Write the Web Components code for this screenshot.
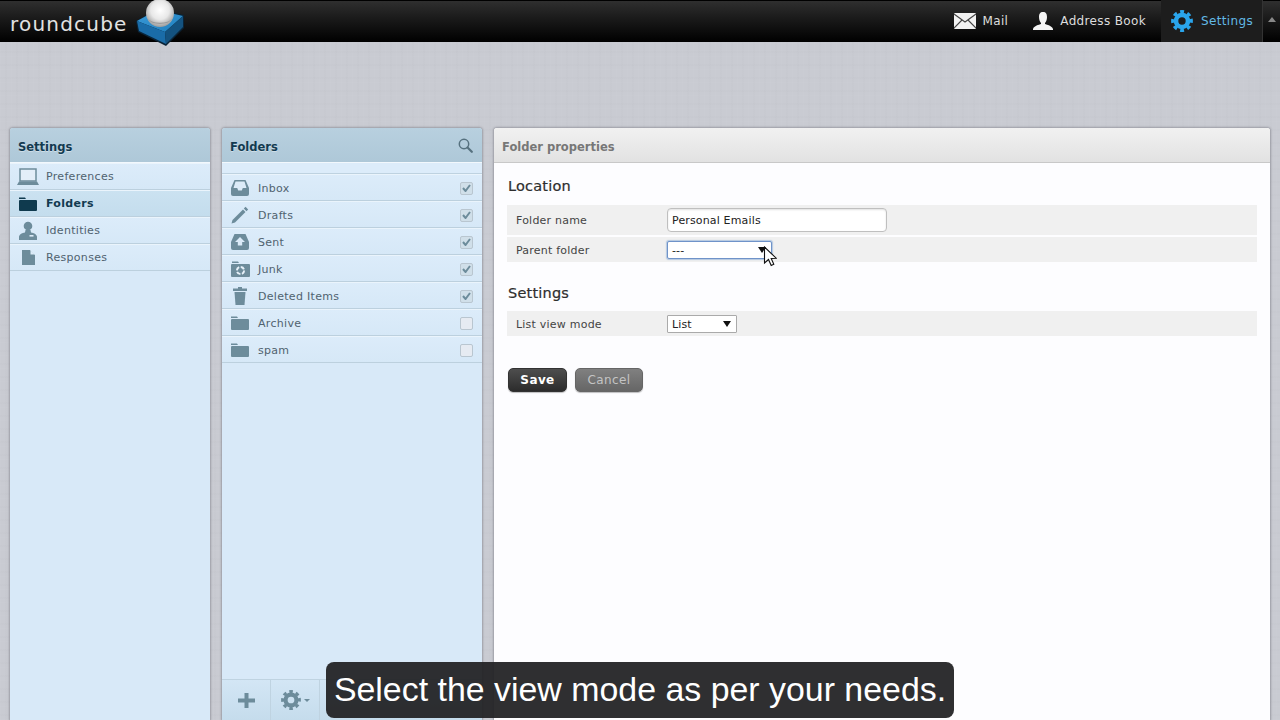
<!DOCTYPE html>
<html lang="en"><head><meta charset="utf-8"><title>Roundcube</title>
<style>
html,body{margin:0;height:720px;overflow:hidden}
body{font-family:"DejaVu Sans",sans-serif;font-size:11px;background:#c9cbd2;position:relative;display:flex;flex-direction:column}
#main{flex:1;min-height:0;display:flex;gap:12px;padding:86px 10px 0;
background-color:#c9cbd2;
background-image:repeating-linear-gradient(90deg,rgba(255,255,255,.025) 0 1px,transparent 1px 5px,rgba(0,0,0,.008) 5px 7px,transparent 7px 11px),repeating-linear-gradient(0deg,rgba(255,255,255,.025) 0 1px,transparent 1px 4px,rgba(0,0,0,.008) 4px 6px,transparent 6px 13px)}
</style></head><body>
<rc-header></rc-header>
<div id="main">
  <rc-panel style="width:200px" title-text="Settings">
    <rc-row icon="laptop">Preferences</rc-row>
    <rc-row icon="folder" selected>Folders</rc-row>
    <rc-row icon="identity">Identities</rc-row>
    <rc-row icon="doc">Responses</rc-row>
  </rc-panel>
  <rc-panel style="width:260px" title-text="Folders" search gap footer>
    <rc-row icon="inbox" check="on">Inbox</rc-row>
    <rc-row icon="pencil" check="on">Drafts</rc-row>
    <rc-row icon="sent" check="on">Sent</rc-row>
    <rc-row icon="junk" check="on">Junk</rc-row>
    <rc-row icon="trash" check="on">Deleted Items</rc-row>
    <rc-row icon="folder2" check="off">Archive</rc-row>
    <rc-row icon="folder2" check="off">spam</rc-row>
  </rc-panel>
  <rc-content style="flex:1"></rc-content>
</div>
<rc-cursor></rc-cursor>
<rc-caption>Select the view mode as per your needs.</rc-caption>
<script>
const G='#6d8c9b';
const ICONS={
mail:'<svg width="22" height="16" viewBox="0 0 22 16"><rect width="22" height="16" rx="1" fill="#f2f2f2"/><path d="M0 1l11 8 11-8M0 15l8-8M22 15l-8-8" fill="none" stroke="#444" stroke-width="1.1"/></svg>',
person:'<svg width="20" height="20" viewBox="0 0 20 20"><path d="M10 1c3 0 4 2 4 5s-1 5-2 6v1c2 1 7 1.500 8 5v1H0v-1c1-3.500 6-4 8-5v-1C7 11 6 9 6 6s1-5 4-5z" fill="#f4f4f4"/></svg>',
gear:'<svg width="22" height="22" viewBox="0 0 22 22"><circle cx="11" cy="11" r="6" fill="none" stroke="COL" stroke-width="4.600"/><circle cx="11" cy="11" r="9.200" fill="none" stroke="COL" stroke-width="3.400" stroke-dasharray="3.800 3.425" transform="rotate(-13 11 11)"/></svg>',
laptop:`<svg width="22" height="18" viewBox="0 0 22 18"><path d="M3 1h16v12H3z" fill="#e3eef8" stroke="${G}" stroke-width="1.500"/><path d="M2 13.500h18l2 3.500H0z" fill="${G}"/></svg>`,
folder:'<svg width="18" height="14" viewBox="0 0 18 14"><path d="M0 2V.5h6L7 2z" fill="#0f3a4e"/><rect y="3" width="18" height="11" rx="1" fill="#0f3a4e"/></svg>',
folder2:`<svg width="18" height="14" viewBox="0 0 18 14"><path d="M0 2V.5h6L7 2z" fill="${G}"/><rect y="3" width="18" height="11" rx="1" fill="${G}"/></svg>`,
identity:`<svg width="18" height="19" viewBox="0 0 18 19"><circle cx="9" cy="5" r="4.300" fill="${G}"/><path d="M6.500 9h5l.5 2.500c3 .5 5.500 1.500 6 4V19H0v-3.500c.5-2.500 3-3.500 6-4z" fill="${G}"/><rect x="10.500" y="14" width="4" height="1.600" fill="#dcebf8"/></svg>`,
doc:`<svg width="13" height="15" viewBox="0 0 13 15"><path d="M0 0h8l5 5v10H0z" fill="${G}"/><path d="M8.500 0L13 4.500H8.500z" fill="#dcebf8"/></svg>`,
inbox:`<svg width="18" height="16" viewBox="0 0 18 16"><path d="M3.500 0h11L18 8v6a2 2 0 0 1-2 2H2a2 2 0 0 1-2-2V8z" fill="${G}"/><path d="M4.500 1.500h9L15.500 8h-3.700L10.800 10.500H7.200L6.200 8H2.500z" fill="#dcebf8"/></svg>`,
sent:`<svg width="18" height="16" viewBox="0 0 18 16"><path d="M3.500 0h11L18 8v6a2 2 0 0 1-2 2H2a2 2 0 0 1-2-2V8z" fill="${G}"/><path d="M9 3l5 5h-2.800V11.500H6.800V8H4z" fill="#dcebf8"/></svg>`,
pencil:`<svg width="18" height="18" viewBox="0 0 18 18"><path d="M12 3.500l2.500 2.500L4 16.500 .5 17.500 1.500 14z" fill="${G}"/><path d="M14.500 .8l2.700 2.700-1.700 1.700-2.700-2.700z" fill="${G}"/></svg>`,
junk:`<svg width="19" height="16" viewBox="0 0 19 16"><path d="M1 2V.5h6L8 2z" fill="${G}"/><rect y="3" width="19" height="13" rx="1" fill="${G}"/><circle cx="9.500" cy="9.500" r="3.600" fill="none" stroke="#e8f2fa" stroke-width="2" stroke-dasharray="4 1.600"/></svg>`,
trash:`<svg width="14" height="18" viewBox="0 0 14 18"><path d="M5 0h4v1.500h5V4H0V1.500h5z" fill="${G}"/><path d="M1.500 5h11l-1 13h-9z" fill="${G}"/></svg>`,
search:'<svg width="15" height="15" viewBox="0 0 15 15"><circle cx="6" cy="6" r="4.700" fill="none" stroke="#56717f" stroke-width="1.500"/><path d="M9.500 9.500l4.300 4.300" stroke="#56717f" stroke-width="2.200" stroke-linecap="round"/></svg>',
plus:`<svg width="17" height="15" viewBox="0 0 17 15"><path d="M6.500 0h4v5.500H17v4h-6.500V15h-4V9.500H0v-4h6.500z" fill="${G}"/></svg>`
};
function icon(n,col){return (ICONS[n]||'').replace(/COL/g,col||'#2aa5ec')}
function def(name,render){customElements.define(name,class extends HTMLElement{constructor(){super();this.attachShadow({mode:'open'})}connectedCallback(){this.shadowRoot.innerHTML=render(this)}})}

def('rc-header',()=>`<style>
:host{display:flex;flex:none;height:42px;align-items:stretch;background:linear-gradient(#000 0 1px,#2f2f2f 1px,#1c1c1c 40%,#000 100%);color:#ddd;font-size:12px;position:relative;z-index:2}
.logo{display:flex;align-items:center;padding-left:10px;position:relative}
.word{font:400 20px/1 "DejaVu Sans",sans-serif;color:#e2e2e2;letter-spacing:1.2px;padding-top:5px}
.cube{position:absolute;left:135px;top:0}
nav{margin-left:auto;display:flex;align-items:stretch}
.it{display:flex;align-items:center;gap:7px;padding-right:25px;letter-spacing:.35px}
.on{background:#1d1d1d;color:#62b9e6;padding:0 9px 0 10px;gap:8px;border-right:1px solid #333;margin-left:-10px}
.tg{width:17px;display:flex;justify-content:center;padding-top:17px;box-sizing:border-box}
.tg i{width:0;height:0;border:4px solid transparent;border-top:0;border-bottom:5px solid #888}
</style>
<div class="logo"><span class="word">roundcube</span>
<svg class="cube" width="52" height="46" viewBox="0 0 52 46"><defs><radialGradient id="ba" cx=".5" cy=".4" r=".6"><stop offset="0" stop-color="#fff"/><stop offset=".55" stop-color="#e8e8e8"/><stop offset="1" stop-color="#9c9c9c"/></radialGradient><linearGradient id="tp" x1="0" y1="0" x2="1" y2="1"><stop offset="0" stop-color="#3b9bd8"/><stop offset="1" stop-color="#1f7fbe"/></linearGradient></defs>
<path d="M1 21L22 9 49 15 49 28 31 46 3 32z" fill="#0a2438"/><path d="M2 21L22 10 48 16 30 32z" fill="url(#tp)"/><path d="M2 21L30 32 31 44 4 31z" fill="#1a6ca8"/><path d="M30 32L48 16 48 27 31 44z" fill="#14527f"/>
<circle cx="25" cy="13" r="14" fill="url(#ba)"/><path d="M13 19a13 8 0 0 0 24 0 13 6 0 0 1-24 0z" fill="#8d8d8d" opacity=".7"/></svg></div>
<nav><div class="it">${icon('mail')}<span>Mail</span></div><div class="it">${icon('person')}<span>Address Book</span></div>
<div class="it on">${icon('gear')}<span>Settings</span></div><div class="tg"><i></i></div></nav>`);

def('rc-panel',h=>`<style>
:host{display:flex;flex-direction:column;min-height:0;background:#d8e9f8;border-radius:3px 3px 0 0;box-shadow:0 0 2px 1px rgba(90,90,100,.4);overflow:hidden}
header{flex:none;height:34px;box-sizing:border-box;display:flex;align-items:center;justify-content:space-between;padding:3px 9px 0 8px;background:linear-gradient(#b8d0df,#aec8d8);font-weight:bold;font-size:11.500px;letter-spacing:0;color:#123a50;text-shadow:0 1px 0 rgba(255,255,255,.4)}
header svg{margin-top:-3px}
.sep{height:1px;background:#f2f8fd;flex:none}
.gap{height:11px;flex:none;background:#dcecfa;border-bottom:1px solid #bed2e0;box-sizing:border-box}
.list{flex:1;min-height:0}
footer{flex:none;height:41px;box-sizing:border-box;border-top:1px solid #bfd3e1;background:linear-gradient(#d3e6f5,#c5dcec);display:flex}
footer div{display:flex;align-items:center;justify-content:center;border-right:1px solid #bfd3e1;box-sizing:border-box}
.p{width:49px}.g{width:49px;gap:3px}
.g svg{width:20px;height:20px}
.g i{width:0;height:0;border:3px solid transparent;border-top:3px solid ${G};border-bottom:0}
</style><header><span>${h.getAttribute('title-text')}</span>${h.hasAttribute('search')?icon('search'):''}</header><div class="sep"></div>
${h.hasAttribute('gap')?'<div class="gap"></div>':''}<div class="list"><slot></slot></div>
${h.hasAttribute('footer')?`<footer><div class="p">${icon('plus')}</div><div class="g">${icon('gear',G)}<i></i></div></footer>`:''}`);

def('rc-row',h=>{const sel=h.hasAttribute('selected'),c=h.getAttribute('check');return `<style>
:host{display:flex;align-items:center;height:27px;box-sizing:border-box;border-bottom:1px solid #bcd0de;box-shadow:inset 0 1px 0 #eaf4fc;padding-right:9px;${c?'padding-top:2px;':'padding-top:1px;'}color:#50626f;letter-spacing:.3px;background:${sel?'linear-gradient(#cbe2f1,#c4dded)':'linear-gradient(#dcecfa,#d6e8f7)'};${sel?'color:#123a50;font-weight:bold;':''}}
.ic{width:36px;flex:none;display:flex;justify-content:center}
.t{flex:1}
.c{width:11px;height:11px;border:1px solid #b9c6d0;border-radius:2px;background:${c==='on'?'#d0dfe9':'#e6ebf2'};display:flex;align-items:center;justify-content:center}
</style><span class="ic">${icon(h.getAttribute('icon'))}</span><span class="t"><slot></slot></span>${c?`<span class="c">${c==='on'?`<svg width="9" height="8" viewBox="0 0 9 8"><path d="M1 4l2.500 3L8 1" fill="none" stroke="${G}" stroke-width="2"/></svg>`:''}</span>`:''}`});

def('rc-content',()=>`<style>
:host{display:flex;flex-direction:column;background:#fdfdff;border-radius:3px 3px 0 0;box-shadow:0 0 2px 1px rgba(90,90,100,.4);overflow:hidden;min-height:0}
header{height:35px;flex:none;box-sizing:border-box;border-bottom:1px solid #c8c8c8;padding:3px 8px 0;display:flex;align-items:center;background:linear-gradient(#f1f1f1,#e2e2e2);font-size:11.500px;font-weight:bold;color:#777}
.body{padding:14px 13px 0 13px;color:#333;display:flex;flex-direction:column;align-items:stretch}
h3{margin:0;font-size:14.500px;font-weight:normal;color:#2e2e2e;line-height:18px;padding-left:1px;letter-spacing:.2px;-webkit-text-stroke:.2px #2e2e2e}
.r{display:flex;align-items:center;background:#f0f0f0;padding-left:9px;color:#444;letter-spacing:.22px}
.l{width:151px;flex:none}
.adj{padding-top:1px}
.f{background:#fff;box-sizing:border-box;color:#222;display:flex;align-items:center;padding-left:4px;letter-spacing:.15px}
.in{width:220px;height:24px;border:1px solid #bfbfbf;border-radius:4px;box-shadow:inset 0 1px 2px rgba(0,0,0,.12)}
.se{height:18px;border:1px solid #aaa;border-radius:1px;justify-content:space-between;padding-right:5px}
.se i{width:0;height:0;border:4px solid transparent;border-top:6px solid #111;border-bottom:0}
.foc{border:1px solid #6f93c9;box-shadow:0 0 1px 1px rgba(120,160,210,.5);border-radius:2px;width:105px}
.bts{display:flex;gap:8px;margin-top:32px;padding-left:1px}
.b{height:24px;box-sizing:border-box;border-radius:5px;display:flex;align-items:center;justify-content:center;font-size:12px;letter-spacing:.4px;box-shadow:0 1px 1px rgba(0,0,0,.25)}
.sv{width:59px;background:linear-gradient(#4e4e4e,#2c2c2c);color:#fff;font-weight:bold;border:1px solid #333}
.cn{width:68px;background:linear-gradient(#808080,#666);color:#c4c4c4;border:1px solid #666}
</style><header>Folder properties</header><div class="body">
<h3>Location</h3>
<div class="r" style="height:30px;margin-top:10px"><span class="l">Folder name</span><div class="f in">Personal Emails</div></div>
<div class="r" style="height:25px;margin-top:2px"><span class="l adj">Parent folder</span><div class="f se foc"><span class="adj">---</span><i></i></div></div>
<h3 style="margin-top:22px">Settings</h3>
<div class="r" style="height:25px;margin-top:9px"><span class="l adj">List view mode</span><div class="f se" style="width:70px"><span class="adj">List</span><i></i></div></div>
<div class="bts"><div class="b sv">Save</div><div class="b cn">Cancel</div></div>
</div>`);

def('rc-cursor',()=>`<style>:host{position:absolute;left:763px;top:246px;display:block;z-index:3;line-height:0}</style>
<svg width="14" height="22" viewBox="0 0 14 22"><path d="M1.500 1v16l4-3.500 2.700 6 2.600-1.200-2.600-5.800 5-.3z" fill="#fff" stroke="#111" stroke-width="1.100"/></svg>`);

def('rc-caption',()=>`<style>:host{position:absolute;left:326px;top:662px;width:628px;height:56px;box-sizing:border-box;display:flex;align-items:center;justify-content:center;background:rgba(34,34,36,.94);border-radius:8px;color:#fff;font:33.900px/1 "Liberation Sans",Arial,sans-serif;white-space:nowrap;z-index:4}</style><slot></slot>`);
</script>
</body></html>
